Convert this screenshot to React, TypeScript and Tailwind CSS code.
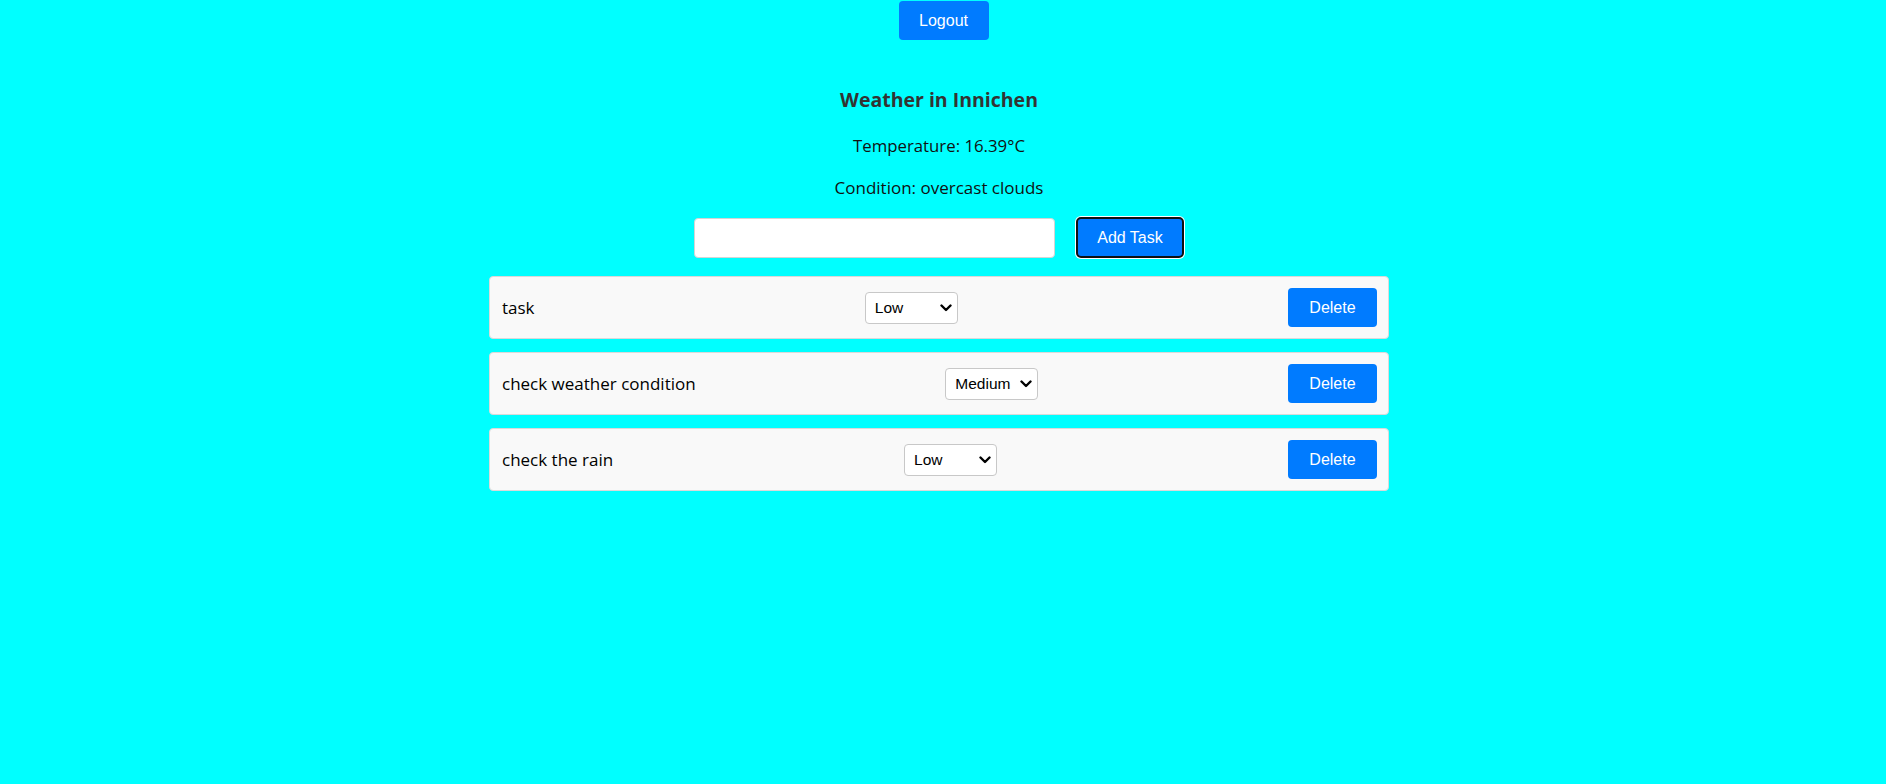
import React from "react";

type Task = { text: string; priority: string };

const tasks: Task[] = [
  { text: "task", priority: "Low" },
  { text: "check weather condition", priority: "Medium" },
  { text: "check the rain", priority: "Low" },
];

function Chevron() {
  return (
    <svg width="12" height="8" viewBox="0 0 12 8" className="pointer-events-none absolute right-[6px] top-1/2 -translate-y-1/2">
      <polyline points="1.5,1.5 6,6 10.5,1.5" fill="none" stroke="#000" strokeWidth="2.4" strokeLinecap="round" strokeLinejoin="round" />
    </svg>
  );
}

function PrioritySelect({ value }: { value: string }) {
  return (
    <div className="relative w-[93px] h-[32px]">
      <select
        defaultValue={value}
        className="appearance-none w-full h-full bg-white border border-[#c8c8c8] rounded-[4px] pl-[9px] pr-[22px] text-[15.5px] text-black font-['Liberation_Sans',Arial,sans-serif] outline-none"
      >
        <option>Low</option>
        <option>Medium</option>
        <option>High</option>
      </select>
      <Chevron />
    </div>
  );
}

export default function App() {
  return (
    <div className="min-h-[784px] w-full bg-[#00ffff] font-['Open_Sans','Noto_Sans',sans-serif]">
      <div className="flex justify-center pt-[1px] pl-[1px]">
        <button className="w-[90px] h-[39px] rounded-[4px] bg-[#007bff] text-white text-[16px] font-['Liberation_Sans',Arial,sans-serif]">
          Logout
        </button>
      </div>
      <div className="flex flex-col items-center pr-[8px]">
        <h3 className="mt-[45px] h-[30px] leading-[30px] text-[19.5px] font-bold text-[#333333]">
          Weather in Innichen
        </h3>
        <p className="mt-[19px] h-[24px] leading-[24px] text-[16.8px] text-[#111111]">
          Temperature: 16.39°C
        </p>
        <p className="mt-[18px] h-[24px] leading-[24px] text-[17px] text-[#111111]">
          Condition: overcast clouds
        </p>
        <div className="mt-[17px] flex items-center gap-[21px] h-[41px]">
          <input
            type="text"
            className="w-[361px] h-[40px] bg-white border border-[#d4d4d4] rounded-[4px] px-[10px] outline-none"
          />
          <button className="w-[108px] h-[41px] rounded-[5px] bg-[#007bff] border-2 border-[#101010] shadow-[0_0_0_1px_#ffffff] text-white text-[16px] font-['Liberation_Sans',Arial,sans-serif]">
            Add Task
          </button>
        </div>
        <ul className="mt-[18px] flex flex-col gap-[13px] w-[900px]">
          {tasks.map((t, i) => (
            <li
              key={i}
              className="h-[63px] flex items-center justify-between bg-[#f9f9f9] border border-[#dadada] rounded-[4px] pl-[12px] pr-[11px]"
            >
              <span className="text-[17px] text-black">{t.text}</span>
              <PrioritySelect value={t.priority} />
              <button className="w-[89px] h-[39px] rounded-[4px] bg-[#007bff] text-white text-[16px] font-['Liberation_Sans',Arial,sans-serif]">
                Delete
              </button>
            </li>
          ))}
        </ul>
      </div>
    </div>
  );
}
